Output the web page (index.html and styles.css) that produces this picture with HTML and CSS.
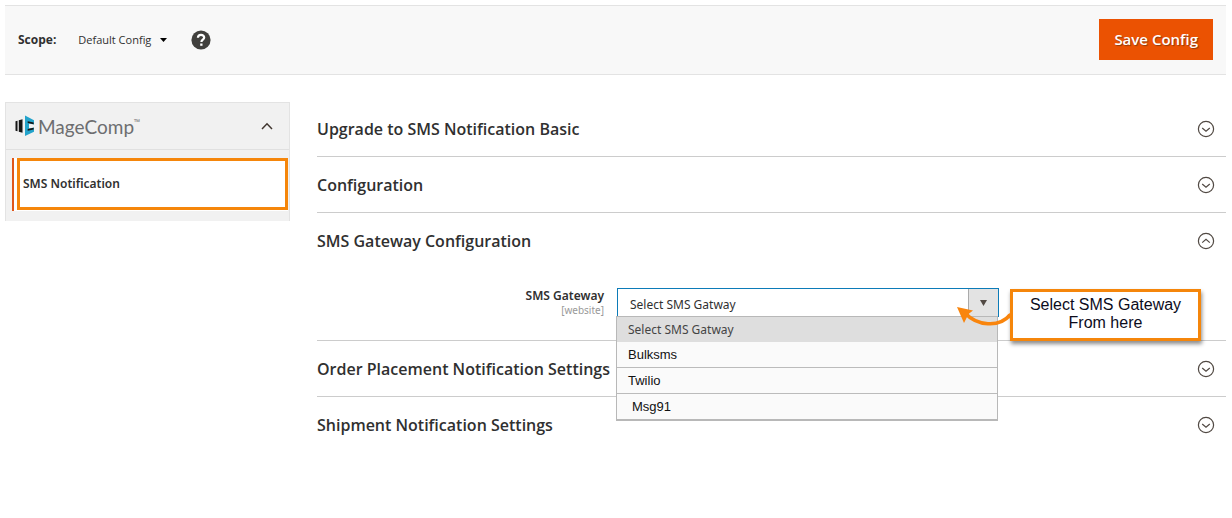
FILE: index.html
```html
<!DOCTYPE html>
<html lang="en">
<head>
<meta charset="utf-8">
<meta name="viewport" content="width=device-width, initial-scale=1">
<title>Configuration</title>
<link rel="stylesheet" href="styles.css">
</head>
<body>
<svg class="symbols" aria-hidden="true">
  <symbol id="chevron-down" viewBox="0 0 18 18"><circle cx="9" cy="9" r="7.6"/><path d="M5.2 8 9 11.3 12.8 8"/></symbol>
  <symbol id="chevron-up" viewBox="0 0 18 18"><circle cx="9" cy="9" r="7.6"/><path d="M5.2 10.6 9 7.3l3.8 3.3"/></symbol>
</svg>

<header class="toolbar">
  <span class="scope-label">Scope:</span>
  <button class="scope-switch" type="button">Default Config
    <svg class="caret" viewBox="0 0 7 4" aria-hidden="true"><path d="M0 0h7L3.5 4z"/></svg>
  </button>
  <a class="help" href="#help" aria-label="Help">
    <svg viewBox="0 0 20 20" aria-hidden="true">
      <circle cx="10" cy="10" r="9.6" fill="#41403d"/>
      <path d="M6.9 7.7C7 5.900 8.200 4.900 10 4.900c1.900 0 3.200 1 3.200 2.600 0 2.100-2.800 2.300-2.800 4.600" fill="none" stroke="#fff" stroke-width="2.200"/>
      <rect x="9.200" y="13.500" width="2.300" height="2.300" fill="#fff"/>
    </svg>
  </a>
  <button class="save" type="button">Save Config</button>
</header>

<div class="columns">
  <nav class="sidebar">
    <button class="brand" type="button" aria-expanded="true">
      <svg class="brand-mark" viewBox="0 0 20 22" aria-hidden="true">
        <path d="M.5 6.200 2.500 5.800v10.400l-2-.4z" fill="#151515"/>
        <path d="M3.800 5.200 7.500 4.200v13.600l-3.700-1z" fill="#151515"/>
        <path d="M10 .6 19 5.200v4.200l-5-.8v4.800l5-.8v4.200L10 21z" fill="#23a3cb"/>
        <path d="M12.700 6.200 18.600 7.400v1.800l-5.900-1.200zM12.700 14l5.900-1.200v1.800l-5.900 1.200z" fill="#151515"/>
      </svg>
      <span class="brand-name">MageComp</span><span class="brand-tm">™</span>
      <svg class="brand-chevron" viewBox="0 0 12 8" aria-hidden="true"><path d="M1 7 6 1.800 11 7"/></svg>
    </button>
    <ul class="nav-items">
      <li class="nav-current"><a class="nav-link" href="#sms" aria-current="page">SMS Notification</a></li>
    </ul>
  </nav>

  <main class="sections">
    <section class="section">
      <button class="section-head" type="button" aria-expanded="false">Upgrade to SMS Notification Basic<svg class="toggle" aria-hidden="true"><use href="#chevron-down"/></svg></button>
    </section>
    <section class="section">
      <button class="section-head" type="button" aria-expanded="false">Configuration<svg class="toggle" aria-hidden="true"><use href="#chevron-down"/></svg></button>
    </section>
    <section class="section">
      <button class="section-head" type="button" aria-expanded="true">SMS Gateway Configuration<svg class="toggle" aria-hidden="true"><use href="#chevron-up"/></svg></button>
      <div class="field">
        <label class="field-label" for="gateway">SMS Gateway<span class="field-scope">[website]</span></label>
        <div class="control">
          <select class="select" id="gateway">
            <option>Select SMS Gatway</option>
          </select>
          <span class="select-arrow" aria-hidden="true"><svg viewBox="0 0 7 6"><path d="M0 0h7L3.500 6z"/></svg></span>
          <ul class="menu" role="listbox" aria-label="SMS Gateway">
            <li class="option option-selected" role="option" aria-selected="true">Select SMS Gatway</li>
            <li class="option" role="option" aria-selected="false">Bulksms</li>
            <li class="option" role="option" aria-selected="false">Twilio</li>
            <li class="option option-inset" role="option" aria-selected="false">Msg91</li>
          </ul>
          <div class="callout">
            <svg class="callout-arrow" viewBox="0 0 58 24" aria-hidden="true">
              <path d="M9 7C21 20 43 22 54 9" fill="none" stroke="#f9850d" stroke-width="3.500"/>
              <path d="M1 1 17 4.500 12.500 8 8 17z" fill="#f9850d"/>
              <path d="M51 9.500 55 6v8z" fill="#f9850d"/>
            </svg>
            Select SMS Gateway<br>From here
          </div>
        </div>
      </div>
    </section>
    <section class="section">
      <button class="section-head" type="button" aria-expanded="false">Order Placement Notification Settings<svg class="toggle" aria-hidden="true"><use href="#chevron-down"/></svg></button>
    </section>
    <section class="section">
      <button class="section-head" type="button" aria-expanded="false">Shipment Notification Settings<svg class="toggle" aria-hidden="true"><use href="#chevron-down"/></svg></button>
    </section>
  </main>
</div>
</body>
</html>
```
FILE: styles.css
```css
* { box-sizing: border-box; }

body {
  margin: 0;
  padding: 5px 6px 0 5px;
  background: #fff;
  color: #303030;
  font-family: "Open Sans", "Noto Sans", sans-serif;
}

button {
  border: 0;
  background: none;
  color: inherit;
  font-family: inherit;
  cursor: pointer;
}

svg { display: block; }
.symbols { position: absolute; width: 0; height: 0; }

.toolbar {
  display: flex;
  align-items: center;
  padding: 13px 13px 14px;
  border: 1px solid #e3e3e3;
  border-width: 1px 0;
  background: #f8f8f8;
}

.scope-label { font-size: 12px; font-weight: 700; }

.scope-switch {
  display: flex;
  align-items: center;
  gap: 9px;
  margin-left: 22px;
  padding: 0;
  font-size: 11px;
}

.caret { width: 7px; height: 4px; fill: #000; }
.help { margin-left: 24px; }
.help svg { width: 20px; height: 20px; }

.save {
  margin-left: auto;
  padding: 10px 15px;
  background: #eb5202;
  color: #fff;
  font-size: 15px;
  font-weight: 600;
  line-height: 21px;
  text-shadow: 1px 1px 1px #8f3a0c;
}

.columns {
  display: flex;
  align-items: flex-start;
  gap: 27px;
  padding-top: 27px;
}

.sidebar {
  flex: 0 0 285px;
  border: 1px solid #e3e3e3;
  border-bottom: 0;
  background: #f1f1f1;
}

.brand {
  display: flex;
  align-items: center;
  width: 100%;
  height: 47px;
  padding: 0 16px 0 9px;
  border-bottom: 1px solid #e0e0e0;
}

.brand-mark { width: 20px; height: 22px; }
.brand-name { margin-left: 3px; color: #6d6e70; font-family: Lato, sans-serif; font-size: 19px; }
.brand-tm { align-self: flex-start; padding-top: 13px; color: #6d6e70; font-size: 8px; }
.brand-chevron { width: 12px; height: 8px; margin-left: auto; fill: none; stroke: #41362f; stroke-width: 1.5; }

.nav-items { margin: 0; padding: 8px 1px 10px 6px; list-style: none; }

.nav-current {
  padding: 0 0 1px 3px;
  border-left: 2px solid #e0561a;
  background: #fff;
}

.nav-link {
  display: block;
  padding-left: 3px;
  border: 3px solid #f5860b;
  color: #303030;
  font-family: "Noto Sans", sans-serif;
  font-size: 12px;
  font-weight: 600;
  line-height: 46px;
  text-decoration: none;
}

.sections { flex: 1; min-width: 0; }
.section + .section { border-top: 1px solid #ccc; }

.section-head {
  display: flex;
  align-items: center;
  justify-content: space-between;
  width: 100%;
  height: 55px;
  padding: 0 11px 0 0;
  font-size: 16px;
  font-weight: 600;
  line-height: 20px;
  text-align: left;
}

.section:first-child .section-head { height: 54px; }

.toggle { width: 18px; height: 18px; fill: none; stroke: #514943; stroke-width: 1.2; }

.field {
  display: grid;
  grid-template-columns: 287px 382px;
  column-gap: 13px;
  padding: 20px 0 23px;
}

.field-label { font-family: "Noto Sans", sans-serif; font-size: 12px; font-weight: 600; line-height: 16px; text-align: right; }
.field-scope { display: block; color: #999; font-size: 10px; font-weight: 400; line-height: 12px; }
.control { position: relative; height: 29px; }

.select {
  width: 100%;
  height: 100%;
  padding: 3px 40px 0 12px;
  border: 1px solid #0c7bb8;
  border-radius: 0;
  appearance: none;
  background: #fff;
  color: #303030;
  font-family: "Noto Sans", sans-serif;
  font-size: 12px;
}

.select-arrow {
  position: absolute;
  top: 1px;
  right: 1px;
  bottom: 0;
  display: grid;
  place-items: center;
  width: 30px;
  border-left: 1px solid #aaa;
  background: #e3e3e3;
  pointer-events: none;
}

.select-arrow svg { width: 7px; height: 6px; fill: #514943; }

.menu {
  position: absolute;
  z-index: 1;
  top: 28px;
  left: -1px;
  width: 382px;
  margin: 0;
  padding: 0;
  border: 1px solid #b8b8b8;
  border-bottom-width: 2px;
  background: #fafafa;
  list-style: none;
}

.option {
  padding-left: 11px;
  color: #111;
  font-family: "Liberation Sans", Arial, sans-serif;
  font-size: 13px;
  line-height: 25px;
}

.option + .option + .option { border-top: 1px solid #bbb; }
.option-selected { background: #dedede; color: #444; font-family: "Noto Sans", sans-serif; font-size: 12px; }
.option-inset { padding-left: 15px; }

.callout {
  position: absolute;
  z-index: 2;
  top: 1px;
  left: 393px;
  width: 191px;
  padding: 4px 0 6px;
  border: 3px solid #f5860b;
  background: #fff;
  box-shadow: 1px 3px 4px rgba(0, 0, 0, .45);
  color: #0c0c1c;
  font-family: "Liberation Sans", Arial, sans-serif;
  font-size: 16px;
  line-height: 18px;
  text-align: center;
}

.callout-arrow { position: absolute; top: 14px; left: -57px; width: 58px; height: 24px; overflow: visible; }
```
